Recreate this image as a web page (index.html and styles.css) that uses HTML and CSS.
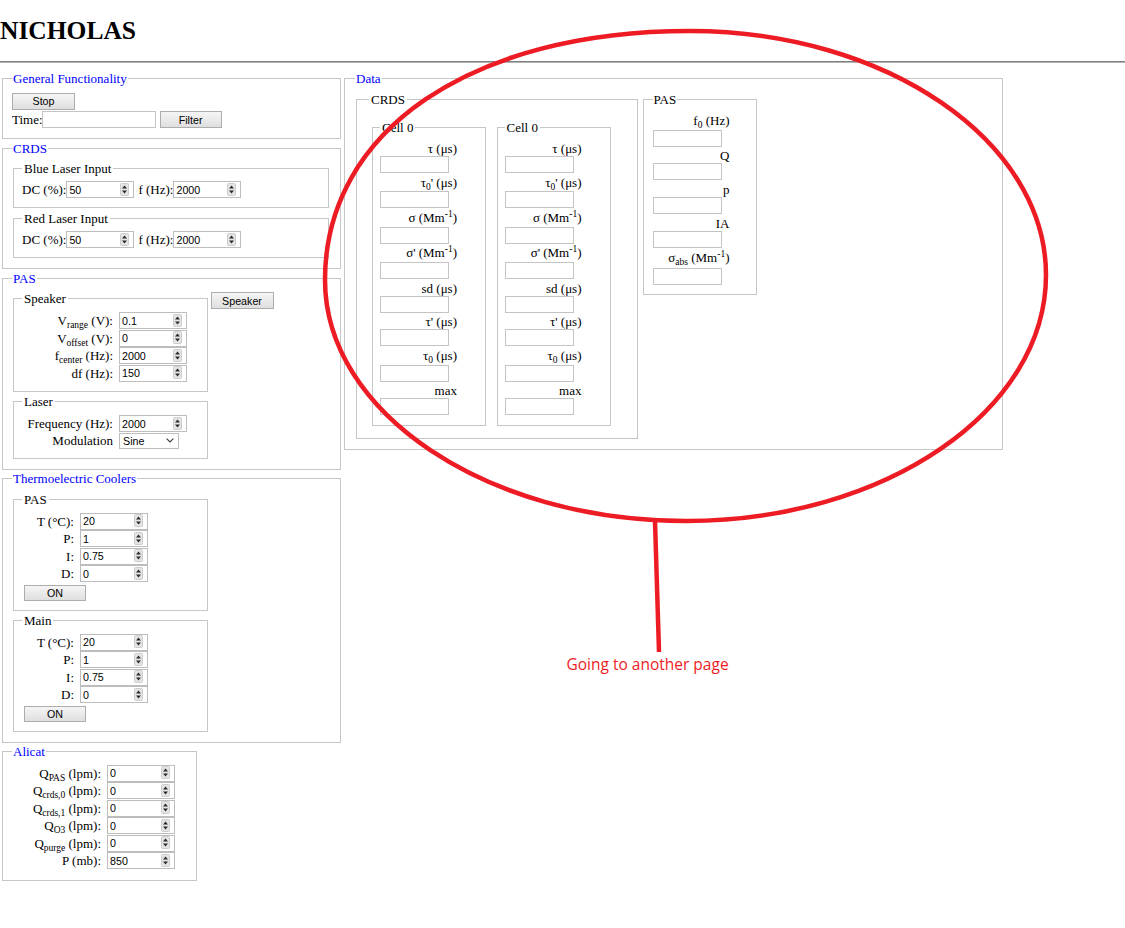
FILE: index.html
```html
<!DOCTYPE html>
<html>
<head>
<meta charset="utf-8">
<title>NICHOLAS</title>
<link rel="stylesheet" href="styles.css">
</head>
<body>
<h1 class="title">NICHOLAS</h1>
<hr class="rule">
<div class="main">
  <div class="left">
    <fieldset class="grp">
      <legend>General Functionality</legend>
      <div class="gf-row"><button class="btn btn-stop">Stop</button></div>
      <div class="gf-row gf-time"><span>Time:</span><input class="box time" type="text"><button class="btn btn-filter">Filter</button></div>
    </fieldset>

    <fieldset class="grp">
      <legend>CRDS</legend>
      <fieldset class="sub wide">
        <legend>Blue Laser Input</legend>
        <div class="lrow"><span>DC (%):</span><span class="num"><input type="text" value="50"><svg class="spin" viewBox="0 0 9 13" width="9" height="13"><rect x="0.5" y="0.5" width="8" height="12" rx="1" fill="#e4e4e4" stroke="#cdcdcd"/><path d="M2 5.6h5L4.5 2.6z" fill="#2b2b2b"/><path d="M2 7.4h5L4.5 10.4z" fill="#2b2b2b"/></svg></span><span class="lgap">f (Hz):</span><span class="num"><input type="text" value="2000"><svg class="spin" viewBox="0 0 9 13" width="9" height="13"><rect x="0.5" y="0.5" width="8" height="12" rx="1" fill="#e4e4e4" stroke="#cdcdcd"/><path d="M2 5.6h5L4.5 2.6z" fill="#2b2b2b"/><path d="M2 7.4h5L4.5 10.4z" fill="#2b2b2b"/></svg></span></div>
      </fieldset>
      <fieldset class="sub wide">
        <legend>Red Laser Input</legend>
        <div class="lrow"><span>DC (%):</span><span class="num"><input type="text" value="50"><svg class="spin" viewBox="0 0 9 13" width="9" height="13"><rect x="0.5" y="0.5" width="8" height="12" rx="1" fill="#e4e4e4" stroke="#cdcdcd"/><path d="M2 5.6h5L4.5 2.6z" fill="#2b2b2b"/><path d="M2 7.4h5L4.5 10.4z" fill="#2b2b2b"/></svg></span><span class="lgap">f (Hz):</span><span class="num"><input type="text" value="2000"><svg class="spin" viewBox="0 0 9 13" width="9" height="13"><rect x="0.5" y="0.5" width="8" height="12" rx="1" fill="#e4e4e4" stroke="#cdcdcd"/><path d="M2 5.6h5L4.5 2.6z" fill="#2b2b2b"/><path d="M2 7.4h5L4.5 10.4z" fill="#2b2b2b"/></svg></span></div>
      </fieldset>
    </fieldset>

    <fieldset class="grp">
      <legend>PAS</legend>
      <div class="pas-layout">
        <div class="pas-col">
          <fieldset class="sub fixed">
            <legend>Speaker</legend>
            <div class="form f-spk">
              <span class="lb">V<sub>range</sub> (V):</span><span class="num"><input type="text" value="0.1"><svg class="spin" viewBox="0 0 9 13" width="9" height="13"><rect x="0.5" y="0.5" width="8" height="12" rx="1" fill="#e4e4e4" stroke="#cdcdcd"/><path d="M2 5.6h5L4.5 2.6z" fill="#2b2b2b"/><path d="M2 7.4h5L4.5 10.4z" fill="#2b2b2b"/></svg></span>
              <span class="lb">V<sub>offset</sub> (V):</span><span class="num"><input type="text" value="0"><svg class="spin" viewBox="0 0 9 13" width="9" height="13"><rect x="0.5" y="0.5" width="8" height="12" rx="1" fill="#e4e4e4" stroke="#cdcdcd"/><path d="M2 5.6h5L4.5 2.6z" fill="#2b2b2b"/><path d="M2 7.4h5L4.5 10.4z" fill="#2b2b2b"/></svg></span>
              <span class="lb">f<sub>center</sub> (Hz):</span><span class="num"><input type="text" value="2000"><svg class="spin" viewBox="0 0 9 13" width="9" height="13"><rect x="0.5" y="0.5" width="8" height="12" rx="1" fill="#e4e4e4" stroke="#cdcdcd"/><path d="M2 5.6h5L4.5 2.6z" fill="#2b2b2b"/><path d="M2 7.4h5L4.5 10.4z" fill="#2b2b2b"/></svg></span>
              <span class="lb">df (Hz):</span><span class="num"><input type="text" value="150"><svg class="spin" viewBox="0 0 9 13" width="9" height="13"><rect x="0.5" y="0.5" width="8" height="12" rx="1" fill="#e4e4e4" stroke="#cdcdcd"/><path d="M2 5.6h5L4.5 2.6z" fill="#2b2b2b"/><path d="M2 7.4h5L4.5 10.4z" fill="#2b2b2b"/></svg></span>
            </div>
          </fieldset>
          <fieldset class="sub fixed">
            <legend>Laser</legend>
            <div class="form f-spk f-laser">
              <span class="lb">Frequency (Hz):</span><span class="num"><input type="text" value="2000"><svg class="spin" viewBox="0 0 9 13" width="9" height="13"><rect x="0.5" y="0.5" width="8" height="12" rx="1" fill="#e4e4e4" stroke="#cdcdcd"/><path d="M2 5.6h5L4.5 2.6z" fill="#2b2b2b"/><path d="M2 7.4h5L4.5 10.4z" fill="#2b2b2b"/></svg></span>
              <span class="lb lb-sel">Modulation</span><span class="selwrap"><select class="sel"><option>Sine</option></select><svg class="chev" viewBox="0 0 8 5" width="8" height="5"><path d="M0.6 0.6L4 4L7.4 0.6" fill="none" stroke="#3a3a3a" stroke-width="1.1"/></svg></span>
            </div>
          </fieldset>
        </div>
        <button class="btn btn-speaker">Speaker</button>
      </div>
    </fieldset>

    <fieldset class="grp">
      <legend>Thermoelectric Coolers</legend>
      <fieldset class="sub fixed">
        <legend>PAS</legend>
        <div class="form f-tec">
          <span class="lb">T (°C):</span><span class="num"><input type="text" value="20"><svg class="spin" viewBox="0 0 9 13" width="9" height="13"><rect x="0.5" y="0.5" width="8" height="12" rx="1" fill="#e4e4e4" stroke="#cdcdcd"/><path d="M2 5.6h5L4.5 2.6z" fill="#2b2b2b"/><path d="M2 7.4h5L4.5 10.4z" fill="#2b2b2b"/></svg></span>
          <span class="lb">P:</span><span class="num"><input type="text" value="1"><svg class="spin" viewBox="0 0 9 13" width="9" height="13"><rect x="0.5" y="0.5" width="8" height="12" rx="1" fill="#e4e4e4" stroke="#cdcdcd"/><path d="M2 5.6h5L4.5 2.6z" fill="#2b2b2b"/><path d="M2 7.4h5L4.5 10.4z" fill="#2b2b2b"/></svg></span>
          <span class="lb">I:</span><span class="num"><input type="text" value="0.75"><svg class="spin" viewBox="0 0 9 13" width="9" height="13"><rect x="0.5" y="0.5" width="8" height="12" rx="1" fill="#e4e4e4" stroke="#cdcdcd"/><path d="M2 5.6h5L4.5 2.6z" fill="#2b2b2b"/><path d="M2 7.4h5L4.5 10.4z" fill="#2b2b2b"/></svg></span>
          <span class="lb">D:</span><span class="num"><input type="text" value="0"><svg class="spin" viewBox="0 0 9 13" width="9" height="13"><rect x="0.5" y="0.5" width="8" height="12" rx="1" fill="#e4e4e4" stroke="#cdcdcd"/><path d="M2 5.6h5L4.5 2.6z" fill="#2b2b2b"/><path d="M2 7.4h5L4.5 10.4z" fill="#2b2b2b"/></svg></span>
        </div>
        <button class="btn btn-on">ON</button>
      </fieldset>
      <fieldset class="sub fixed">
        <legend>Main</legend>
        <div class="form f-tec">
          <span class="lb">T (°C):</span><span class="num"><input type="text" value="20"><svg class="spin" viewBox="0 0 9 13" width="9" height="13"><rect x="0.5" y="0.5" width="8" height="12" rx="1" fill="#e4e4e4" stroke="#cdcdcd"/><path d="M2 5.6h5L4.5 2.6z" fill="#2b2b2b"/><path d="M2 7.4h5L4.5 10.4z" fill="#2b2b2b"/></svg></span>
          <span class="lb">P:</span><span class="num"><input type="text" value="1"><svg class="spin" viewBox="0 0 9 13" width="9" height="13"><rect x="0.5" y="0.5" width="8" height="12" rx="1" fill="#e4e4e4" stroke="#cdcdcd"/><path d="M2 5.6h5L4.5 2.6z" fill="#2b2b2b"/><path d="M2 7.4h5L4.5 10.4z" fill="#2b2b2b"/></svg></span>
          <span class="lb">I:</span><span class="num"><input type="text" value="0.75"><svg class="spin" viewBox="0 0 9 13" width="9" height="13"><rect x="0.5" y="0.5" width="8" height="12" rx="1" fill="#e4e4e4" stroke="#cdcdcd"/><path d="M2 5.6h5L4.5 2.6z" fill="#2b2b2b"/><path d="M2 7.4h5L4.5 10.4z" fill="#2b2b2b"/></svg></span>
          <span class="lb">D:</span><span class="num"><input type="text" value="0"><svg class="spin" viewBox="0 0 9 13" width="9" height="13"><rect x="0.5" y="0.5" width="8" height="12" rx="1" fill="#e4e4e4" stroke="#cdcdcd"/><path d="M2 5.6h5L4.5 2.6z" fill="#2b2b2b"/><path d="M2 7.4h5L4.5 10.4z" fill="#2b2b2b"/></svg></span>
        </div>
        <button class="btn btn-on">ON</button>
      </fieldset>
    </fieldset>

    <fieldset class="grp alicat">
      <legend>Alicat</legend>
      <div class="form f-ali">
        <span class="lb">Q<sub>PAS</sub> (lpm):</span><span class="num"><input type="text" value="0"><svg class="spin" viewBox="0 0 9 13" width="9" height="13"><rect x="0.5" y="0.5" width="8" height="12" rx="1" fill="#e4e4e4" stroke="#cdcdcd"/><path d="M2 5.6h5L4.5 2.6z" fill="#2b2b2b"/><path d="M2 7.4h5L4.5 10.4z" fill="#2b2b2b"/></svg></span>
        <span class="lb">Q<sub>crds,0</sub> (lpm):</span><span class="num"><input type="text" value="0"><svg class="spin" viewBox="0 0 9 13" width="9" height="13"><rect x="0.5" y="0.5" width="8" height="12" rx="1" fill="#e4e4e4" stroke="#cdcdcd"/><path d="M2 5.6h5L4.5 2.6z" fill="#2b2b2b"/><path d="M2 7.4h5L4.5 10.4z" fill="#2b2b2b"/></svg></span>
        <span class="lb">Q<sub>crds,1</sub> (lpm):</span><span class="num"><input type="text" value="0"><svg class="spin" viewBox="0 0 9 13" width="9" height="13"><rect x="0.5" y="0.5" width="8" height="12" rx="1" fill="#e4e4e4" stroke="#cdcdcd"/><path d="M2 5.6h5L4.5 2.6z" fill="#2b2b2b"/><path d="M2 7.4h5L4.5 10.4z" fill="#2b2b2b"/></svg></span>
        <span class="lb">Q<sub>O3</sub> (lpm):</span><span class="num"><input type="text" value="0"><svg class="spin" viewBox="0 0 9 13" width="9" height="13"><rect x="0.5" y="0.5" width="8" height="12" rx="1" fill="#e4e4e4" stroke="#cdcdcd"/><path d="M2 5.6h5L4.5 2.6z" fill="#2b2b2b"/><path d="M2 7.4h5L4.5 10.4z" fill="#2b2b2b"/></svg></span>
        <span class="lb">Q<sub>purge</sub> (lpm):</span><span class="num"><input type="text" value="0"><svg class="spin" viewBox="0 0 9 13" width="9" height="13"><rect x="0.5" y="0.5" width="8" height="12" rx="1" fill="#e4e4e4" stroke="#cdcdcd"/><path d="M2 5.6h5L4.5 2.6z" fill="#2b2b2b"/><path d="M2 7.4h5L4.5 10.4z" fill="#2b2b2b"/></svg></span>
        <span class="lb">P (mb):</span><span class="num"><input type="text" value="850"><svg class="spin" viewBox="0 0 9 13" width="9" height="13"><rect x="0.5" y="0.5" width="8" height="12" rx="1" fill="#e4e4e4" stroke="#cdcdcd"/><path d="M2 5.6h5L4.5 2.6z" fill="#2b2b2b"/><path d="M2 7.4h5L4.5 10.4z" fill="#2b2b2b"/></svg></span>
      </div>
    </fieldset>
  </div>

  <fieldset class="grp data">
    <legend>Data</legend>
    <div class="data-row">
      <fieldset class="dsub crdsd">
        <legend>CRDS</legend>
        <div class="cells">
          <fieldset class="dsub cell">
            <legend>Cell 0</legend>
            <div class="dcol">
              <div class="dlab">τ (μs)</div><input class="box" type="text">
              <div class="dlab hs">τ<sub>0</sub>' (μs)</div><input class="box" type="text">
              <div class="dlab hs">σ (Mm<sup>-1</sup>)</div><input class="box" type="text">
              <div class="dlab hs">σ' (Mm<sup>-1</sup>)</div><input class="box" type="text">
              <div class="dlab">sd (μs)</div><input class="box" type="text">
              <div class="dlab">τ' (μs)</div><input class="box" type="text">
              <div class="dlab hs">τ<sub>0</sub> (μs)</div><input class="box" type="text">
              <div class="dlab">max</div><input class="box" type="text">
            </div>
          </fieldset>
          <fieldset class="dsub cell">
            <legend>Cell 0</legend>
            <div class="dcol">
              <div class="dlab">τ (μs)</div><input class="box" type="text">
              <div class="dlab hs">τ<sub>0</sub>' (μs)</div><input class="box" type="text">
              <div class="dlab hs">σ (Mm<sup>-1</sup>)</div><input class="box" type="text">
              <div class="dlab hs">σ' (Mm<sup>-1</sup>)</div><input class="box" type="text">
              <div class="dlab">sd (μs)</div><input class="box" type="text">
              <div class="dlab">τ' (μs)</div><input class="box" type="text">
              <div class="dlab hs">τ<sub>0</sub> (μs)</div><input class="box" type="text">
              <div class="dlab">max</div><input class="box" type="text">
            </div>
          </fieldset>
        </div>
      </fieldset>
      <fieldset class="dsub pasd">
        <legend>PAS</legend>
        <div class="dcol">
          <div class="dlab hs">f<sub>0</sub> (Hz)</div><input class="box" type="text">
          <div class="dlab">Q</div><input class="box" type="text">
          <div class="dlab">p</div><input class="box" type="text">
          <div class="dlab">IA</div><input class="box" type="text">
          <div class="dlab hs2">σ<sub>abs</sub> (Mm<sup>-1</sup>)</div><input class="box" type="text">
        </div>
      </fieldset>
    </div>
  </fieldset>
</div>

<svg class="markup" viewBox="0 0 1125 928" width="1125" height="928" aria-hidden="true">
  <path d="M325 280 C325 130.6 471 31 690 31 C885.8 31 1046 140.8 1046 275 C1046 410.9 884.8 521 686 521 C486.6 521 325 413 325 280 Z" fill="none" stroke="#ed1c24" stroke-width="4.5"/>
  <path d="M655 521 L659 652" fill="none" stroke="#ed1c24" stroke-width="4.5"/>
</svg>
<div class="note">Going to another page</div>
</body>
</html>
```

FILE: styles.css
```css
* { box-sizing: border-box; }
html, body { margin: 0; padding: 0; background: #fff; }
body {
  position: relative;
  width: 1125px;
  min-height: 928px;
  font-family: "Liberation Serif", "Times New Roman", serif;
  font-size: 13px;
  line-height: 15px;
  color: #000;
}
.title {
  margin: 0;
  padding-top: 16px;
  font-size: 25.5px;
  line-height: 30px;
  font-weight: bold;
}
.rule {
  margin: 15px 0 0;
  height: 0;
  border: 0;
  border-top: 1px solid #7f7f7f;
  border-bottom: 1px solid #b4b4b4;
}
.main {
  display: flex;
  align-items: flex-start;
  gap: 3px;
  padding-left: 2px;
  margin-top: 7.5px;
}
.left {
  width: 339px;
  display: flex;
  flex-direction: column;
  align-items: flex-start;
}
fieldset {
  margin: 0;
  border: 1px solid #c6c6c6;
  min-width: 0;
}
legend { line-height: 15px; }
sub, sup { font-size: 9.5px; line-height: 0; }
sub { vertical-align: -3px; }
sup { vertical-align: 5px; }

.grp {
  width: 339px;
  padding: 5.5px 11px 10px 9px;
  margin-bottom: 1.5px;
}
.grp > legend { color: #0000ff; padding: 0 1px; }
.grp.alicat { width: 195px; }

.sub {
  margin: 0 0 2px 1px;
  padding: 6px 8px 9px 8px;
}
.sub:last-child { margin-bottom: 0; }
.sub > legend { padding: 0 2px; }
.sub.wide { padding-top: 5px; margin-bottom: 3px; }
.sub.wide:last-child { margin-bottom: 0; }
.sub.fixed { width: 195px; }

/* controls */
.btn {
  display: block;
  margin: 0;
  padding: 0;
  height: 17px;
  border: 1px solid #adadad;
  background: linear-gradient(#f5f5f5, #dfdfdf);
  font-family: "Liberation Sans", Arial, sans-serif;
  font-size: 10.7px;
  color: #000;
}
.btn-stop { width: 63px; margin-top: 1.5px; }
.btn-filter { width: 62px; margin-left: 4px; }
.btn-speaker { width: 63px; margin-top: 1px; }
.btn-on { width: 62px; height: 16px; margin: 2px 0 0 2px; }

.gf-row { display: flex; align-items: center; }
.gf-time { margin-top: 1.5px; height: 17px; }

.box {
  display: block;
  margin: 0;
  width: 69px;
  height: 17px;
  border: 1px solid #c4c4c4;
  padding: 0 2px;
  background: #fff;
  font-family: "Liberation Sans", Arial, sans-serif;
  font-size: 10.7px;
  outline: none;
}
.box.time { width: 114px; margin-left: -1px; }

.num {
  position: relative;
  display: block;
  width: 68px;
  height: 17px;
  border: 1px solid #bdbdbd;
  background: #fff;
}
.num input {
  display: block;
  width: 100%;
  height: 15px;
  margin: 0;
  border: 0;
  padding: 0 0 0 2px;
  background: transparent;
  outline: none;
  font-family: "Liberation Sans", Arial, sans-serif;
  font-size: 10.7px;
  color: #000;
}
.spin {
  position: absolute;
  right: 4px;
  top: 0.5px;
}

.lrow {
  display: flex;
  align-items: center;
  height: 17px;
  white-space: nowrap;
}
.lgap { margin-left: 4px; }

.pas-layout { display: flex; align-items: flex-start; gap: 2.5px; }

.form {
  display: grid;
  column-gap: 6px;
  grid-auto-rows: 17.5px;
}
.form .lb {
  text-align: right;
  line-height: 17.5px;
  white-space: nowrap;
}
.f-spk { grid-template-columns: 91px 68px; }
.f-laser { grid-template-rows: 17.5px 16px; }
.f-tec { grid-template-columns: 52px 68px; }
.f-ali { grid-template-columns: 89px 68px; }
.lb-sel { line-height: 16px !important; }

.selwrap { position: relative; display: block; width: 60px; height: 16px; }
.sel {
  -webkit-appearance: none;
  appearance: none;
  display: block;
  width: 60px;
  height: 16px;
  margin: 0;
  padding: 0 0 0 3px;
  border: 1px solid #bdbdbd;
  border-radius: 0;
  background: #fff;
  font-family: "Liberation Sans", Arial, sans-serif;
  font-size: 10.7px;
  color: #000;
  outline: none;
}
.chev { position: absolute; right: 5px; top: 5.5px; }

/* data */
.grp.data {
  width: 659px;
  padding: 6px 10px 10px 10px;
}
.data-row { display: flex; align-items: flex-start; gap: 4.5px; }
.dsub > legend { padding: 0 2px; }
.crdsd {
  width: 282px;
  margin-left: 1px;
  padding: 13px 0 12.5px 12px;
}
.cells { display: flex; align-items: flex-start; gap: 10.5px; margin-left: 3px; }
.cell {
  width: 114px;
  padding: 6.5px 0 9.5px 7px;
}
.pasd {
  width: 114px;
  padding: 6.5px 0 9px 9px;
}
.pasd > legend { padding: 0 1px; }
.dcol { width: 77px; }
.dcol .box { margin-bottom: 1.7px; }
.dcol .box:last-child { margin-bottom: 0; }
.dlab { text-align: right; line-height: 15px; white-space: nowrap; }
.dlab.hs { line-height: 16.6px; }
.dlab.hs2 { line-height: 18.6px; }

/* annotation overlay */
.markup {
  position: absolute;
  left: 0;
  top: 0;
  pointer-events: none;
}
.note {
  position: absolute;
  left: 566.5px;
  top: 653.5px;
  font-family: "Open Sans", "Noto Sans", sans-serif;
  font-size: 15.5px;
  line-height: 21px;
  color: #ed1c24;
  white-space: nowrap;
}
```
